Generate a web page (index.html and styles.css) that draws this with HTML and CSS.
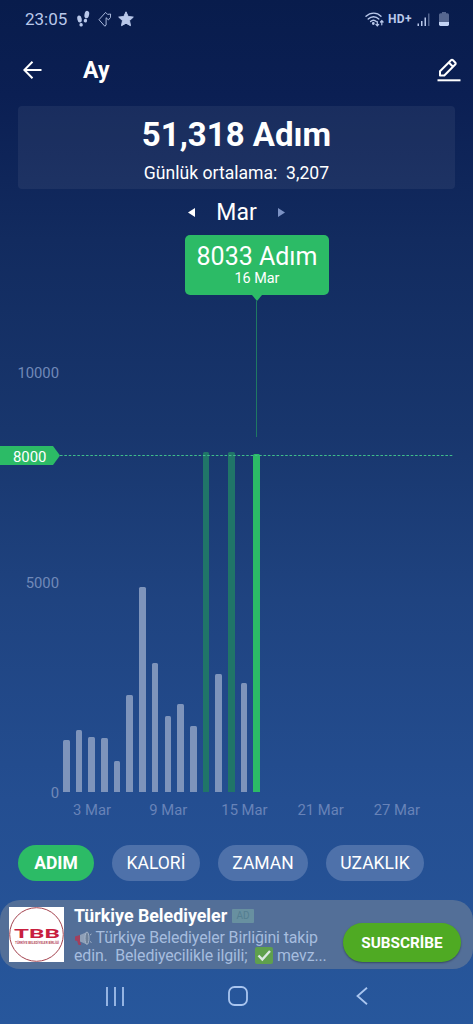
FILE: index.html
```html
<!DOCTYPE html>
<html lang="tr">
<head>
  <meta charset="UTF-8">
  <meta name="viewport" content="width=device-width, initial-scale=1.0">
  <title>Adım - Ay</title>
  <link rel="stylesheet" href="styles.css">
</head>
<body>
  <div class="screen">
    <div class="status-bar">
      <span class="time">23:05</span>
      <svg class="steps-icon" width="16" height="18" viewBox="0 0 16 18" fill="currentColor">
        <ellipse cx="3.500" cy="9" rx="2.200" ry="3.500" transform="rotate(-12 3.500 9)"/>
        <ellipse cx="5.100" cy="14.800" rx="1.700" ry="1.800" transform="rotate(-12 5.100 14.800)"/>
        <ellipse cx="10.800" cy="4.600" rx="2.300" ry="3.800" transform="rotate(12 10.800 4.600)"/>
        <ellipse cx="9.400" cy="10.600" rx="1.700" ry="1.900" transform="rotate(12 9.400 10.600)"/>
      </svg>
      <svg class="tag-icon" width="14" height="17" viewBox="0 0 14 17" fill="none" stroke="currentColor" stroke-width=".9" stroke-linejoin="round">
        <path d="M6.800 15.200 1 8.700 7.600 1.400l2 2 3-.4-.2 3.600-2 2.300-2.300-2.200v7.400l-1.300 1.100"/>
      </svg>
      <svg width="16" height="16" viewBox="0 0 16 16" fill="currentColor" stroke="currentColor" stroke-linejoin="round">
        <path d="M8 .8l2.200 4.700 5.100.6-3.800 3.500 1 5.100L8 12.200l-4.500 2.500 1-5.100L.7 6.100l5.100-.6z"/>
      </svg>
      <div class="status-right">
        <svg width="19" height="15" viewBox="0 0 19 15" fill="none" stroke="currentColor" stroke-width="1.400" stroke-linecap="round">
          <path d="M1 4.300C5.500 0 12 0 16 4.300M3.200 7C6.400 3.900 10.800 3.900 13.800 7M5.600 9.500c1.800-1.700 3.900-1.700 5.700 0"/>
          <circle cx="8.300" cy="11.500" r=".7" fill="currentColor"/>
          <path stroke-width="1.200" d="M12.300 9.500v4.200M10.900 12.400l1.400 1.500 1.400-1.500M16.800 12.800V8.800M15.500 10l1.300-1.400L18.100 10"/>
        </svg>
        <span class="hd">HD+</span>
        <svg class="signal" width="13" height="13" viewBox="0 0 13 13" fill="currentColor">
          <path d="M.5 10.500h1.500V13H.5zM4 8h1.500v5H4zM7.500 4.500H9V13H7.500z"/>
          <path opacity=".4" d="M11 .5h1.500V13H11z"/>
        </svg>
        <svg width="10" height="14" viewBox="0 0 10 14">
          <path fill="#55668f" d="M3 0h4v1.300h1.500A1.500 1.500 0 0 1 10 2.800V10H0V2.800A1.500 1.500 0 0 1 1.500 1.300H3z"/>
          <path fill="#c3d3f4" d="M0 10h10v2.600A1.400 1.400 0 0 1 8.600 14H1.400A1.400 1.400 0 0 1 0 12.600z"/>
        </svg>
      </div>
    </div>

    <header class="header">
      <svg width="20" height="18" viewBox="0 0 20 18" fill="none" stroke="#fff" stroke-width="2">
        <path d="M18.500 9H1.500M9.500 .8 1.300 9l8.200 8.200"/>
      </svg>
      <h1>Ay</h1>
      <svg class="edit" width="24" height="24" viewBox="0 0 24 24" fill="none" stroke="#fff" stroke-width="2" stroke-linejoin="round">
        <path d="M3 17.500v-4.300L14 2.300q1-1 2 0l2.200 2.200q1 1 0 2L7.300 17.500zM11.800 4.500l4.200 4.200"/>
        <path d="M.5 22.300h23"/>
      </svg>
    </header>

    <section class="summary">
      <div class="total">51,318 Adım</div>
      <div class="average">Günlük ortalama:&nbsp; 3,207</div>
    </section>

    <div class="month">
      <svg width="7" height="9" viewBox="0 0 7 9"><path fill="#fff" d="M7 0v9L0 4.500z"/></svg>
      <span>Mar</span>
      <svg width="7" height="9" viewBox="0 0 7 9"><path fill="#7c92c4" d="M0 0v9l7-4.500z"/></svg>
    </div>

    <section class="chart">
      <div class="plot">
        <div class="tooltip">
          <div class="tooltip-value">8033 Adım</div>
          <div class="tooltip-date">16 Mar</div>
        </div>
        <div class="marker"></div>
        <div class="scale">
          <span>10000</span>
          <span>5000</span>
          <span>0</span>
        </div>
        <div class="goal">
          <div class="goal-label">8000</div>
          <svg class="goal-line" width="393" height="1"><path d="M0 .5h393" stroke="#3fbd8b" stroke-dasharray="2.600 1.730"/></svg>
        </div>
        <div class="bars">
          <div class="bar" style="height: 12.5%"></div>
          <div class="bar" style="height: 14.7%"></div>
          <div class="bar" style="height: 13.1%"></div>
          <div class="bar" style="height: 12.8%"></div>
          <div class="bar" style="height: 7.4%"></div>
          <div class="bar" style="height: 23.2%"></div>
          <div class="bar" style="height: 48.9%"></div>
          <div class="bar" style="height: 30.8%"></div>
          <div class="bar" style="height: 18.1%"></div>
          <div class="bar" style="height: 21%"></div>
          <div class="bar" style="height: 15.8%"></div>
          <div class="bar done" style="height: 80.95%"></div>
          <div class="bar" style="height: 28.1%"></div>
          <div class="bar done" style="height: 80.95%"></div>
          <div class="bar" style="height: 25.9%"></div>
          <div class="bar selected" style="height: 80.4%"></div>
        </div>
      </div>
      <div class="dates">
        <span>3 Mar</span>
        <span>9 Mar</span>
        <span>15 Mar</span>
        <span>21 Mar</span>
        <span>27 Mar</span>
      </div>
    </section>

    <div class="tabs">
      <button class="tab active">ADIM</button>
      <button class="tab calories">KALORİ</button>
      <button class="tab duration">ZAMAN</button>
      <button class="tab distance">UZAKLIK</button>
    </div>

    <div class="ad">
      <svg class="ad-logo" width="55" height="55" viewBox="0 0 55 55">
        <path fill="#fff" d="M0 0h55v55H0z"/>
        <circle cx="27.500" cy="27.500" r="26.800" fill="none" stroke="#a4434f" stroke-width="1"/>
        <text class="logo-name" x="5" y="31" textLength="46" lengthAdjust="spacingAndGlyphs">TBB</text>
        <text x="6" y="36.500" textLength="44" lengthAdjust="spacingAndGlyphs" font-size="3.200" font-weight="700" fill="#b54a5c">TÜRKİYE BELEDİYELER BİRLİĞİ</text>
      </svg>
      <div class="ad-body">
        <div class="ad-title">Türkiye Belediyeler <span class="ad-badge">AD</span></div>
        <div class="ad-text">
          <svg class="horn" width="18" height="15" viewBox="0 0 18 15">
            <path fill="#a33f5c" d="M1 5.500 6 4v6.500L1 9.500zM3 9.500l3 .5 1 4H4.500z"/>
            <path fill="#8fa0b8" d="M6 4l7-3v12.500l-7-3z"/>
            <ellipse cx="13" cy="7.200" rx="2" ry="6.200" fill="#6f8199" stroke="#a6b5ca"/>
            <path stroke="#a6b5ca" d="M16 4l1.500-1M16 10.500l1.500 1"/>
          </svg>
          Türkiye Belediyeler Birliğini takip<br>
          edin.&nbsp; Belediyecilikle ilgili;&nbsp;
          <svg class="check" width="18" height="17" viewBox="0 0 18 17">
            <rect width="18" height="17" rx="2" fill="#5fa04d"/>
            <path d="M3.500 8.500l3.800 4L15 4" fill="none" stroke="#dce8e4" stroke-width="2.400"/>
          </svg>
          mevz...
        </div>
      </div>
      <button class="subscribe">SUBSCRİBE</button>
    </div>

    <nav class="nav">
      <svg width="18" height="19" viewBox="0 0 18 19" stroke="#a9c5ef" stroke-width="1.700"><path d="M1 0v19M9 0v19M17 0v19"/></svg>
      <svg width="20" height="20" viewBox="0 0 20 20" fill="none" stroke="#a9c5ef" stroke-width="1.800"><rect x="1" y="1" width="18" height="18" rx="5.500"/></svg>
      <svg class="back" width="12" height="18" viewBox="0 0 12 18" fill="none" stroke="#a9c5ef" stroke-width="1.800"><path d="M11 .7 1.500 9l9.500 8.300"/></svg>
    </nav>
  </div>
</body>
</html>
```
FILE: styles.css
```css
* {
  box-sizing: border-box;
}

body {
  margin: 0;
  font-family: Roboto, sans-serif;
  color: #fff;
}

svg {
  display: block;
  flex-shrink: 0;
}

button {
  border: none;
  padding: 0;
  font-family: inherit;
  color: #fff;
}

.screen {
  width: 473px;
  height: 1024px;
  display: flex;
  flex-direction: column;
  overflow: hidden;
  background: linear-gradient(#081c4c 0, #0b1f53 95px, #122b5f 240px, #18366d 430px, #1f4380 600px, #244e91 800px, #27579c 1024px);
}

/* Status bar */
.status-bar {
  height: 38px;
  padding: 0 24px 0 25px;
  display: flex;
  align-items: center;
  color: #b9c8ea;
}

.time {
  width: 51px;
  font-size: 17px;
}

.tag-icon {
  margin: 0 6px 0 6px;
}

.status-right {
  margin-left: auto;
  display: flex;
  align-items: center;
}

.hd {
  margin: 0 5px 0 4px;
  font-size: 12px;
  font-weight: 700;
  letter-spacing: 0.4px;
}

.signal {
  margin-right: 9px;
}

/* Header */
.header {
  height: 68px;
  padding: 0 12px 4px 23px;
  display: flex;
  align-items: center;
}

.header h1 {
  margin: 0 0 0 40px;
  font-size: 23px;
  font-weight: 700;
}

.edit {
  margin-left: auto;
}

/* Summary */
.summary {
  height: 83px;
  margin: 0 18px;
  padding-top: 8px;
  border-radius: 4px;
  background: rgba(255, 255, 255, 0.06);
  text-align: center;
}

.total {
  font-size: 33px;
  line-height: 42px;
  font-weight: 700;
}

.average {
  font-size: 17.6px;
  line-height: 34px;
}

.month {
  height: 46px;
  display: flex;
  align-items: center;
  justify-content: center;
  gap: 21px;
  font-size: 23px;
}

/* Chart */
.chart {
  height: 610px;
}

.plot {
  position: relative;
  height: 557px;
  padding: 137px 0 0 60px;
}

.tooltip {
  position: absolute;
  top: 0;
  left: 185px;
  width: 144px;
  height: 60px;
  padding-top: 8px;
  border-radius: 5px;
  background: #2cbb66;
  text-align: center;
}

.tooltip::after {
  content: "";
  position: absolute;
  top: 60px;
  left: 67px;
  border: 5px solid transparent;
  border-top: 6px solid #2cbb66;
  border-bottom: none;
}

.tooltip-value {
  font-size: 25px;
  line-height: 28px;
}

.tooltip-date {
  font-size: 14.4px;
  line-height: 16px;
}

.marker {
  position: absolute;
  top: 66px;
  left: 256px;
  width: 1px;
  height: 136px;
  background: #1f7862;
}

.scale {
  position: absolute;
  top: 129px;
  left: 0;
  width: 59px;
  height: 438px;
  display: flex;
  flex-direction: column;
  justify-content: space-between;
  text-align: right;
  font-size: 14.8px;
  line-height: 18px;
  color: #7189b8;
}

.goal {
  position: absolute;
  top: 211px;
  left: 0;
  z-index: 1;
  display: flex;
  align-items: center;
}

.goal-label {
  width: 60px;
  height: 19px;
  padding-left: 13px;
  background: #2cbb66;
  clip-path: polygon(0 0, 53px 0, 100% 50%, 53px 100%, 0 100%);
  font-size: 14.9px;
  line-height: 22px;
}

.bars {
  height: 420px;
  display: grid;
  grid-template-columns: repeat(31, 12.7px);
  align-items: end;
  justify-items: center;
}

.bar {
  width: 6.6px;
  border-radius: 1.5px 1.5px 0 0;
  background: #7e94bb;
}

.done {
  background: #207568;
}

.selected {
  background: #2cbb66;
}

.dates {
  padding: 9px 0 0 54px;
  display: flex;
  font-size: 14.8px;
  line-height: 18px;
  color: #6883b8;
}

.dates span {
  width: 76.2px;
  text-align: center;
}

/* Tabs */
.tabs {
  height: 36px;
  padding-left: 18px;
  display: flex;
  gap: 18px;
}

.tab {
  width: 76px;
  border-radius: 18px;
  background: #4e71aa;
  font-size: 17.5px;
}

.active {
  background: #2cbb66;
  font-weight: 700;
}

.calories {
  width: 88px;
}

.duration {
  width: 90px;
}

.distance {
  width: 98px;
}

/* Ad banner */
.ad {
  height: 69px;
  margin-top: 19px;
  padding: 7px 12px 7px 9px;
  display: flex;
  border-radius: 20px;
  background: #536f98;
}

.logo-name {
  font-size: 12.5px;
  font-weight: 700;
  fill: #c8203f;
}

.ad-body {
  flex: 1;
  margin-left: 10px;
  white-space: nowrap;
}

.ad-title {
  display: flex;
  align-items: center;
  gap: 5px;
  font-size: 17.8px;
  line-height: 18px;
  font-weight: 700;
}

.ad-badge {
  width: 22px;
  height: 14px;
  border-radius: 1px;
  background: #6890a0;
  color: #547e91;
  font-size: 10px;
  line-height: 14px;
  font-weight: 400;
  text-align: center;
}

.ad-text {
  margin-top: 4px;
  font-size: 15.9px;
  line-height: 18px;
  letter-spacing: -0.12px;
  color: #a6bddf;
}

.horn,
.check {
  display: inline-block;
  vertical-align: -3px;
}

.subscribe {
  width: 118px;
  height: 39px;
  margin-top: 16px;
  border-radius: 20px;
  background: #4faa23;
  box-shadow: 0 1px 2px rgba(0, 0, 0, 0.35);
  font-size: 15.3px;
  font-weight: 700;
}

/* System navigation */
.nav {
  height: 55px;
  padding-left: 106px;
  padding-bottom: 1px;
  display: flex;
  align-items: center;
  gap: 104px;
}

.back {
  margin-left: 4px;
}
```
